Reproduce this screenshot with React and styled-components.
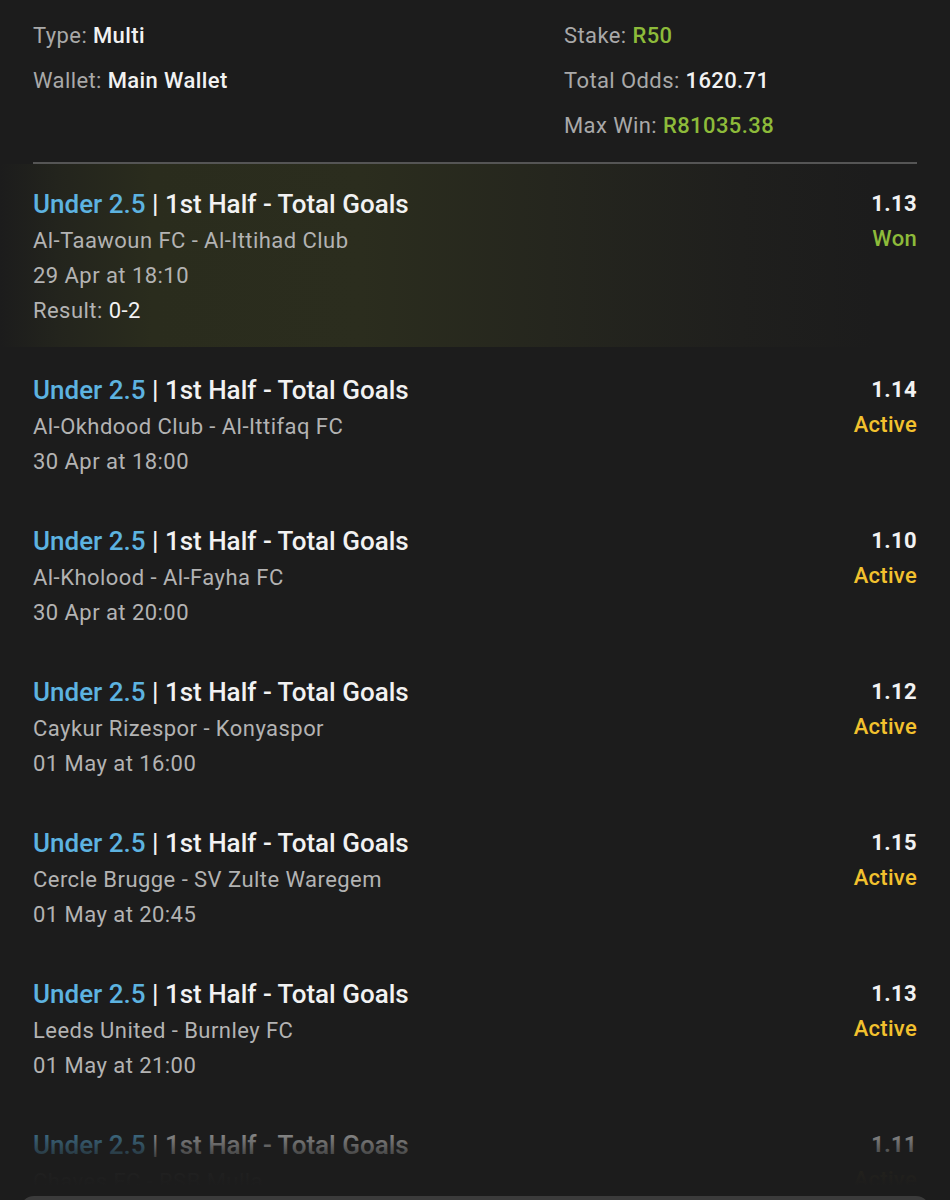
import React from "react";
import styled, { createGlobalStyle } from "styled-components";

const Global = createGlobalStyle`
  html, body { margin: 0; padding: 0; background: #1c1c1c; }
  body { font-family: Roboto, "Noto Sans", sans-serif; -webkit-font-smoothing: antialiased; }
`;

const Page = styled.div`
  height: 1200px;
  display: flex;
  flex-direction: column;
  overflow: hidden;
  background: #1c1c1c;
`;

const Scroller = styled.div`
  position: relative;
  height: 1186px;
  flex: none;
  overflow: hidden;
`;

const Fade = styled.div`
  position: absolute;
  left: 0;
  right: 0;
  bottom: 0;
  height: 80px;
  background: linear-gradient(to bottom, rgba(28,28,28,0) 0%, rgba(28,28,28,0.5) 35%, rgba(28,28,28,0.96) 75%, #1c1c1c 100%);
  pointer-events: none;
`;

const Summary = styled.div`
  display: grid;
  grid-template-columns: 531px 1fr;
  padding: 13px 33px 14px;
`;

const SummaryCol = styled.div`
  display: flex;
  flex-direction: column;
`;

const SummaryLine = styled.div`
  font-size: 22px;
  line-height: 45px;
  color: #a9a9a9;
  white-space: nowrap;
  letter-spacing: 0.4px;
`;

const Val = styled.span`
  color: ${(p) => (p.$green ? "#8dbb3a" : "#f2f2f2")};
  font-weight: 500;
`;

const Divider = styled.div`
  margin: 0 33px;
  height: 2px;
  background: #555555;
`;

const Leg = styled.div`
  display: flex;
  justify-content: space-between;
  padding: ${(p) => (p.$won ? "22px" : "25px")} 33px 19px;
  background: ${(p) =>
    p.$won
      ? "linear-gradient(to right, #1c1c1c 0%, #23241d 6%, #2a2c1d 16%, #2b2d1e 38%, #25261e 58%, #1f1f1d 78%, #1c1c1c 92%)"
      : "transparent"};
`;

const LegInfo = styled.div`
  display: flex;
  flex-direction: column;
`;

const Title = styled.div`
  font-size: 26px;
  line-height: 37px;
  font-weight: 500;
  color: #f2f2f2;
  white-space: nowrap;
  letter-spacing: 0;
`;

const Pick = styled.span`
  color: #5db3e0;
`;

const Sub = styled.div`
  font-size: 22px;
  line-height: 35px;
  color: #b3b3b3;
  white-space: nowrap;
  letter-spacing: 0.45px;
`;

const Score = styled.span`
  color: #f2f2f2;
`;

const LegSide = styled.div`
  display: flex;
  flex-direction: column;
  align-items: flex-end;
`;

const Odds = styled.div`
  font-size: 22px;
  line-height: 35px;
  font-weight: 700;
  color: #f2f2f2;
  letter-spacing: 0.4px;
`;

const Status = styled.div`
  font-size: 22px;
  line-height: 35px;
  font-weight: 500;
  letter-spacing: 0.3px;
  color: ${(p) => (p.$state === "Won" ? "#8dbb3a" : "#f2c12e")};
`;

const Sheet = styled.div`
  margin: 10px 20px 0;
  height: 30px;
  flex: none;
  border-radius: 14px 14px 0 0;
  background: #3b3b3b;
`;

const legs = [
  { teams: "Al-Taawoun FC - Al-Ittihad Club", date: "29 Apr at 18:10", odds: "1.13", status: "Won", result: "0-2" },
  { teams: "Al-Okhdood Club - Al-Ittifaq FC", date: "30 Apr at 18:00", odds: "1.14", status: "Active" },
  { teams: "Al-Kholood - Al-Fayha FC", date: "30 Apr at 20:00", odds: "1.10", status: "Active" },
  { teams: "Caykur Rizespor - Konyaspor", date: "01 May at 16:00", odds: "1.12", status: "Active" },
  { teams: "Cercle Brugge - SV Zulte Waregem", date: "01 May at 20:45", odds: "1.15", status: "Active" },
  { teams: "Leeds United - Burnley FC", date: "01 May at 21:00", odds: "1.13", status: "Active" },
  { teams: "Chaves FC - RSB Mulla", date: "02 May at 19:00", odds: "1.11", status: "Active" },
];

export default function App() {
  return (
    <Page>
      <Global />
      <Scroller>
        <Summary>
          <SummaryCol>
            <SummaryLine>Type: <Val>Multi</Val></SummaryLine>
            <SummaryLine>Wallet: <Val>Main Wallet</Val></SummaryLine>
          </SummaryCol>
          <SummaryCol>
            <SummaryLine>Stake: <Val $green>R50</Val></SummaryLine>
            <SummaryLine>Total Odds: <Val>1620.71</Val></SummaryLine>
            <SummaryLine>Max Win: <Val $green>R81035.38</Val></SummaryLine>
          </SummaryCol>
        </Summary>
        <Divider />
        {legs.map((leg, i) => (
          <Leg key={i} $won={leg.status === "Won"}>
            <LegInfo>
              <Title><Pick>Under 2.5</Pick> | 1st Half - Total Goals</Title>
              <Sub>{leg.teams}</Sub>
              <Sub>{leg.date}</Sub>
              {leg.result && <Sub>Result: <Score>{leg.result}</Score></Sub>}
            </LegInfo>
            <LegSide>
              <Odds>{leg.odds}</Odds>
              <Status $state={leg.status}>{leg.status}</Status>
            </LegSide>
          </Leg>
        ))}
        <Fade />
      </Scroller>
      <Sheet />
    </Page>
  );
}
